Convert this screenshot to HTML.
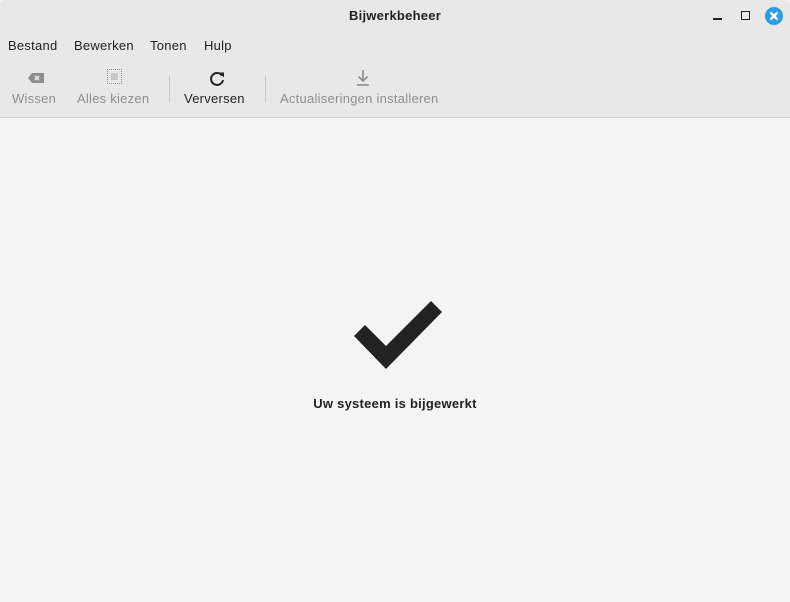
<!DOCTYPE html><html><head><style>
body{margin:0;width:790px;height:602px;background:#f4f4f4;font-family:"Liberation Sans","DejaVu Sans",sans-serif;font-size:13px;letter-spacing:0.25px;color:#222;position:relative;overflow:hidden}
.hdr{position:absolute;left:0;top:0;width:790px;height:117px;background:#e8e8e8;border-bottom:1px solid #d2d2d2;border-radius:6px 6px 0 0}
.t{position:absolute;white-space:nowrap}
.dim{color:#8e8e8e}
.sep{position:absolute;width:1px;height:26px;background:#c9c9c9;top:76px}
</style></head><body>
<div class="hdr">
<div class="t" style="left:0;width:790px;text-align:center;top:8px;font-weight:bold">Bijwerkbeheer</div>
<div style="position:absolute;left:713px;top:18px;width:9px;height:1.5px;background:#222"></div>
<div style="position:absolute;left:741px;top:11px;width:7px;height:7px;border:1.5px solid #222"></div>
<svg style="position:absolute;left:764px;top:6px" width="20" height="20"><circle cx="10" cy="10" r="9" fill="#2a9ee0"/><path d="M6.5 6.5L13.5 13.5M13.5 6.5L6.5 13.5" stroke="#fff" stroke-width="2.4"/></svg>
<div class="t" style="left:8px;top:38px">Bestand</div>
<div class="t" style="left:74px;top:38px">Bewerken</div>
<div class="t" style="left:150px;top:38px">Tonen</div>
<div class="t" style="left:204px;top:38px">Hulp</div>
<svg style="position:absolute;left:26px;top:71px" width="20" height="14"><path d="M2 7L6 2H18V12H6Z" fill="#8e8e8e"/><path d="M9 5L13 9M13 5L9 9" stroke="#e8e8e8" stroke-width="1.6"/></svg>
<div class="t dim" style="left:12px;top:91px">Wissen</div>
<div style="position:absolute;left:107px;top:69px;width:13px;height:13px;border:1.5px dotted #8e8e8e"><div style="margin:3px;width:7px;height:7px;background:#c8c8c8"></div></div>
<div class="t dim" style="left:77px;top:91px">Alles kiezen</div>
<div class="sep" style="left:169px"></div>
<svg style="position:absolute;left:208px;top:70px" width="18" height="18"><path d="M14 5.5A6 6 0 1 0 15 10" fill="none" stroke="#222" stroke-width="2"/><path d="M11 2.5L16 2.5L16 7.5Z" fill="#222"/></svg>
<div class="t" style="left:184px;top:91px">Verversen</div>
<div class="sep" style="left:265px"></div>
<svg style="position:absolute;left:355px;top:69px" width="16" height="18"><path d="M8 1V12M3.5 7.5L8 12L12.5 7.5" fill="none" stroke="#8e8e8e" stroke-width="1.6"/><path d="M2 16H14" stroke="#8e8e8e" stroke-width="1.6"/></svg>
<div class="t dim" style="left:280px;top:91px">Actualiseringen installeren</div>
</div>
<svg style="position:absolute;left:0;top:0" width="790" height="602"><polygon points="354,336 365,325 386,346 431,301 442,312 386,369" fill="#222"/></svg>
<div class="t" style="left:0;width:790px;text-align:center;top:396px;font-weight:bold">Uw systeem is bijgewerkt</div>
</body></html>
